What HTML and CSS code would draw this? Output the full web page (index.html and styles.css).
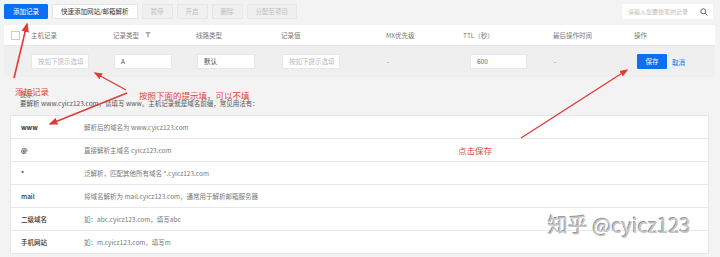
FILE: index.html
```html
<!DOCTYPE html>
<html lang="zh-CN">
<head>
    <meta charset="UTF-8">
    <meta name="viewport" content="width=device-width, initial-scale=1.0">
    <title>解析记录</title>
    <link rel="stylesheet" href="styles.css">
</head>
<body>
    <div class="page">
        <div class="toolbar">
            <button class="btn btn-primary">添加记录</button>
            <button class="btn">快速添加网站/邮箱解析</button>
            <button class="btn btn-disabled">暂停</button>
            <button class="btn btn-disabled">开启</button>
            <button class="btn btn-disabled">删除</button>
            <button class="btn btn-disabled">分配至项目</button>
            <div class="search">
                <span class="search-text">请输入您要搜索的记录</span>
                <svg class="search-icon" width="8" height="8" viewBox="0 0 8 8">
                    <circle cx="3.3" cy="3.3" r="2.5" fill="none" stroke="#555" stroke-width="0.9"/>
                    <line x1="5.1" y1="5.1" x2="7.4" y2="7.4" stroke="#555" stroke-width="0.9"/>
                </svg>
            </div>
        </div>

        <div class="records">
            <div class="row head-row">
                <div class="cell"><span class="checkbox"></span></div>
                <div class="cell">主机记录</div>
                <div class="cell">记录类型
                    <svg class="filter-icon" width="6" height="6" viewBox="0 0 6 6">
                        <path d="M0.5 0.8 H5.5 M3 0.8 V5.4" stroke="#777" stroke-width="0.9" fill="none"/>
                    </svg>
                </div>
                <div class="cell">线路类型</div>
                <div class="cell">记录值</div>
                <div class="cell">MX优先级</div>
                <div class="cell">TTL（秒）</div>
                <div class="cell">最后操作时间</div>
                <div class="cell">操作</div>
            </div>
            <div class="row edit-row">
                <div class="cell"></div>
                <div class="cell"><span class="field placeholder">按如下提示选填</span></div>
                <div class="cell"><span class="field">A</span></div>
                <div class="cell"><span class="field">默认</span></div>
                <div class="cell"><span class="field placeholder">按如下提示选填</span></div>
                <div class="cell dash">-</div>
                <div class="cell"><span class="field ttl">600</span></div>
                <div class="cell dash">-</div>
                <div class="cell">
                    <button class="btn btn-primary btn-save">保存</button>
                    <a class="link">取消</a>
                </div>
            </div>
        </div>

        <div class="tip">
            <p>提示</p>
            <p>要解析 www.cyicz123.com，请填写 www。主机记录就是域名前缀，常见用法有：</p>
        </div>

        <div class="usage">
            <div class="usage-row"><span class="usage-key">www</span><span>解析后的域名为 www.cyicz123.com</span></div>
            <div class="usage-row"><span class="usage-key">@</span><span>直接解析主域名 cyicz123.com</span></div>
            <div class="usage-row"><span class="usage-key">*</span><span>泛解析，匹配其他所有域名 *.cyicz123.com</span></div>
            <div class="usage-row"><span class="usage-key">mail</span><span>将域名解析为 mail.cyicz123.com，通常用于解析邮箱服务器</span></div>
            <div class="usage-row"><span class="usage-key">二级域名</span><span>如：abc.cyicz123.com，填写abc</span></div>
            <div class="usage-row"><span class="usage-key">手机网站</span><span>如：m.cyicz123.com，填写m</span></div>
        </div>

        <!-- annotations drawn over the screenshot -->
        <svg class="marks" width="720" height="257" viewBox="0 0 720 257">
            <defs>
                <marker id="head" markerWidth="6" markerHeight="6" refX="5" refY="3" orient="auto" markerUnits="strokeWidth">
                    <path d="M0 0.6 L6 3 L0 5.4 Z" fill="#e23b36"/>
                </marker>
            </defs>
            <line x1="14" y1="78" x2="27" y2="24" stroke="#e23b36" stroke-width="1.6" marker-end="url(#head)"/>
            <line x1="126" y1="90" x2="95" y2="73" stroke="#e23b36" stroke-width="1.4" marker-end="url(#head)"/>
            <line x1="127" y1="93" x2="50" y2="124" stroke="#e23b36" stroke-width="1.5" marker-end="url(#head)"/>
            <line x1="521" y1="138" x2="627" y2="70" stroke="#e23b36" stroke-width="1.4" marker-end="url(#head)"/>
        </svg>
        <span class="note note-add">添加记录</span>
        <span class="note note-fill">按照下面的提示填，可以不填</span>
        <span class="note note-save">点击保存</span>
        <span class="watermark">知乎 @cyicz123</span>
    </div>
</body>
</html>
```

FILE: styles.css
```css
body {
    margin: 0;
    font-family: "Noto Sans CJK SC", "Noto Sans", sans-serif;
    background-color: #f3f3f3;
    color: #777;
    font-size: 6.5px;
}

.page {
    position: relative;
    width: 720px;
    height: 257px;
    overflow: hidden;
}

.toolbar {
    display: flex;
    gap: 4px;
    height: 25px;
    padding: 4px 7px 0 4px;
    box-sizing: border-box;
}

.btn {
    height: 15px;
    padding: 0 8px;
    border: 1px solid #e6e6e6;
    background: #fff;
    color: #333;
    font-family: inherit;
    font-size: 6.5px;
    line-height: 13px;
    border-radius: 1px;
    white-space: nowrap;
}

.btn-primary {
    background: #0a6ff2;
    border-color: #0a6ff2;
    color: #fff;
}

.btn-disabled {
    background: #f0f0f0;
    color: #bdbdbd;
}

.search {
    margin-left: auto;
    width: 91px;
    height: 15px;
    background: #fff;
    display: flex;
    align-items: center;
    justify-content: space-between;
    padding: 0 5px 0 6px;
    box-sizing: border-box;
}

.search-text {
    color: #bbb;
    font-size: 6px;
}

.records {
    margin: 0 5px 0 4px;
}

.row {
    display: grid;
    grid-template-columns: 27px 82px 83px 85px 105px 77px 90px 81px 1fr;
    align-items: center;
}

.head-row {
    height: 21px;
    background: #fff;
    border-bottom: 1px solid #e9e9e9;
    box-sizing: border-box;
}

.cell {
    display: flex;
    align-items: center;
    gap: 4px;
    white-space: nowrap;
}

.checkbox {
    width: 7px;
    height: 7px;
    margin-left: 7px;
    border: 1px solid #ccc;
    background: #fff;
}

.filter-icon {
    margin-left: 2px;
}

.edit-row {
    height: 31px;
    background: #efefef;
}

.field {
    width: 58px;
    height: 15px;
    background: #fff;
    border: 1px solid #e8e8e8;
    box-sizing: border-box;
    padding-left: 6px;
    line-height: 13px;
    color: #444;
}

.placeholder {
    color: #bbb;
}

.edit-row .cell:nth-child(3) .field,
.edit-row .cell:nth-child(4) .field,
.edit-row .cell:nth-child(5) .field {
    margin-left: 1px;
}

.ttl {
    margin-left: 7px;
    width: 57px;
    color: #666;
}

.dash {
    padding-left: 1px;
    margin-top: -2px;
}

.btn-save {
    margin-left: 3px;
    padding: 0;
    width: 30px;
    text-align: center;
}

.link {
    color: #0a6ff2;
    margin-left: 1px;
}

.tip {
    margin: 0 11px 0 10px;
    height: 38px;
    padding: 13px 10px 0;
    box-sizing: border-box;
    color: #555;
}

.tip p {
    margin: 0;
    line-height: 9px;
}

.usage {
    margin: 0 11px 0 10px;
    background: #fff;
    border: 1px solid #e6e6e6;
    border-bottom: none;
}

.usage-row {
    display: flex;
    align-items: center;
    height: 22px;
    border-bottom: 1px solid #e8e8e8;
    padding-left: 10px;
    color: #777;
}

.usage-key {
    width: 63px;
    flex-shrink: 0;
    color: #333;
    font-weight: 500;
}

.usage-row:nth-child(-n+2) .usage-key {
    font-weight: bold;
}

.marks {
    position: absolute;
    left: 0;
    top: 0;
    pointer-events: none;
}

.note {
    position: absolute;
    color: #e0443e;
    font-size: 8.5px;
    line-height: 10px;
}

.note-add {
    left: 15px;
    top: 86px;
}

.note-fill {
    left: 139px;
    top: 90px;
}

.note-save {
    left: 458px;
    top: 145px;
}

.watermark {
    position: absolute;
    left: 548px;
    top: 212px;
    font-size: 20px;
    line-height: 26px;
    color: #c4c4c4;
    text-shadow: 1px 1px 0 #fff, -1px -1px 0 #999;
}
```
